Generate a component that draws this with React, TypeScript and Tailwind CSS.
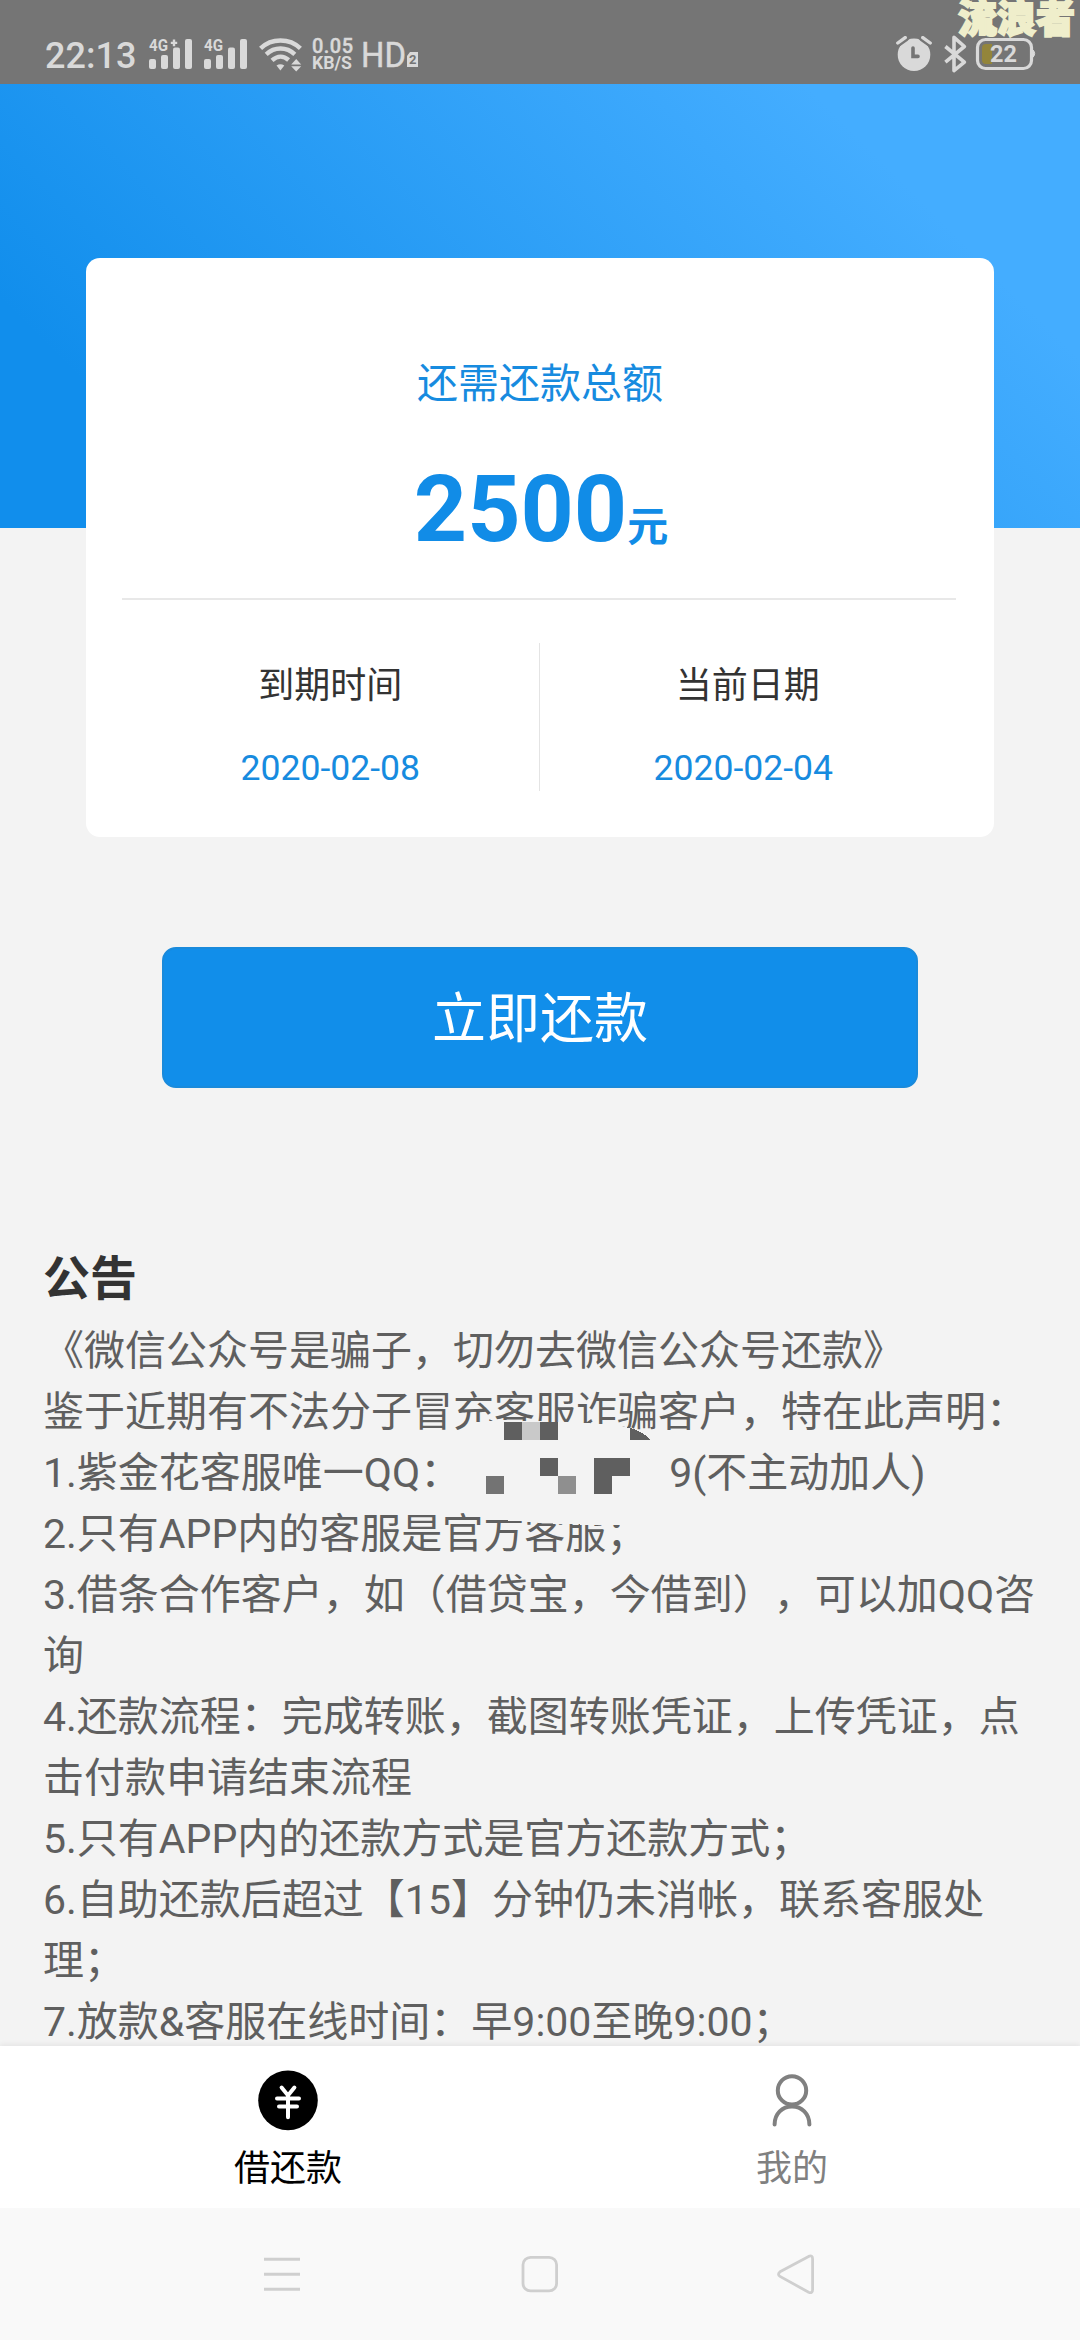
import React from "react";

const notices = [
  "《微信公众号是骗子，切勿去微信公众号还款》",
  "鉴于近期有不法分子冒充客服诈骗客户，特在此声明：",
  "1.紫金花客服唯一QQ：",
  "2.只有APP内的客服是官方客服；",
  "3.借条合作客户，如（借贷宝，今借到），可以加QQ咨询",
  "4.还款流程：完成转账，截图转账凭证，上传凭证，点击付款申请结束流程",
  "5.只有APP内的还款方式是官方还款方式；",
  "6.自助还款后超过【15】分钟仍未消帐，联系客服处理；",
  "7.放款&客服在线时间：早9:00至晚9:00；",
];

const dates = [
  { label: "到期时间", value: "2020-02-08" },
  { label: "当前日期", value: "2020-02-04" },
];

const Signal = ({ plus = false }: { plus?: boolean }) => (
  <svg width="44" height="36" viewBox="0 0 44 36" fill="#d9d9d9" className="overflow-visible">
    <text
      x="0"
      y="15"
      fontSize="16"
      fontWeight="700"
      textLength="19"
      lengthAdjust="spacingAndGlyphs"
    >
      4G
    </text>
    {plus && <path d="M25 3.6v6.6M21.8 6.9h6.4" stroke="#d9d9d9" strokeWidth="2.4" />}
    <rect x="0" y="23" width="7" height="10" rx="2" />
    <rect x="12" y="19" width="7" height="14" rx="2" />
    <rect x="24" y="11.5" width="7" height="21.5" rx="2" />
    <rect x="36" y="3" width="7" height="30" rx="2" />
  </svg>
);

const Wifi = () => (
  <svg width="44" height="36" viewBox="0 0 44 36" fill="none" stroke="#d9d9d9" strokeWidth="4.4">
    <path d="M1.6 12.4C12.5 1.9 30.5 1.9 41.4 12.4" />
    <path d="M7.2 18.4C15.5 10.6 27.5 10.6 35.8 18.4" />
    <path d="M13 24.4C18.5 19.4 24.5 19.4 29.6 24" />
    <path d="M17.5 29.6Q21.3 27 25.3 29.6L21.4 34.4Z" fill="#d9d9d9" stroke="none" />
    <path d="M37.2 23l5 5.6h-10zM37.2 35.4l5-5.2h-10z" fill="#d9d9d9" stroke="none" />
  </svg>
);

const StatusBar = () => (
  <div className="relative flex h-[84px] shrink-0 items-start justify-between bg-[#757575] pt-9 pr-[43px] pl-[45px] text-[#d9d9d9]">
    <div className="flex">
      <span className="w-[104px] text-[36px] leading-[40px] font-medium">22:13</span>
      <div className="flex w-[110px] gap-[11px]">
        <Signal plus />
        <Signal />
      </div>
      <Wifi />
      <svg width="44" height="36" viewBox="0 0 44 36" fill="#d9d9d9" className="ml-[9px] overflow-visible">
        <text x="0" y="17" fontSize="20" fontWeight="500" textLength="41" stroke="#d9d9d9" strokeWidth="0.4">
          0.05
        </text>
        <text x="0" y="33" fontSize="18" fontWeight="700" textLength="40" lengthAdjust="spacingAndGlyphs">
          KB/S
        </text>
      </svg>
      <svg width="60" height="36" viewBox="0 0 60 36" fill="#d9d9d9" className="ml-[5px] overflow-visible">
        <text
          x="0"
          y="31"
          fontSize="35"
          textLength="45"
          lengthAdjust="spacingAndGlyphs"
          stroke="#d9d9d9"
          strokeWidth="0.5"
        >
          HD
        </text>
        <path d="M49 16h8v15H46V20z" />
        <text x="48" y="28.4" fontSize="13" fontWeight="700" fill="#757575">
          2
        </text>
      </svg>
    </div>
    <div className="flex">
      <svg width="38" height="38" viewBox="0 0 38 38" fill="none" strokeLinecap="round">
        <circle cx="19" cy="18.8" r="16.3" fill="#d9d9d9" />
        <path d="M2.6 7L10.4 1.4M35.4 7L27.6 1.4" stroke="#757575" strokeWidth="8" />
        <path d="M2.8 7L10.2 1.6M35.2 7L27.8 1.6" stroke="#d9d9d9" strokeWidth="3.4" />
        <path d="M18 12v8.4h5" stroke="#757575" strokeWidth="3.6" />
      </svg>
      <svg width="30" height="38" viewBox="0 0 30 38" fill="none" className="ml-[9px] overflow-visible">
        <path
          d="M3.4 10.5L22.4 26.2L12 34.6V1.4L22.4 10.5L3.4 26.2"
          stroke="#d9d9d9"
          strokeWidth="3.6"
          strokeLinejoin="round"
        />
      </svg>
      <svg width="62" height="38" viewBox="0 0 62 38" fill="none" className="ml-[3px]">
        <rect x="2.5" y="3.5" width="54" height="29" rx="8" stroke="#d9d9d9" strokeWidth="3.2" />
        <path d="M58 14q3.4 3.6 0 7.2z" fill="#d9d9d9" stroke="#d9d9d9" />
        <path d="M17 8h-6q-4 0-4 4v12q0 4 4 4h6z" fill="#93853b" />
        <text x="15" y="26" fontSize="23.5" fontWeight="700" fill="#d9d9d9">
          22
        </text>
      </svg>
    </div>
    <span className="absolute top-0 right-[5px] text-[39px] leading-[38px] font-black text-[#efeecb] [-webkit-text-stroke:2px_#efeecb]">
      流浪者
    </span>
  </div>
);

// Pixelated patch that hides the QQ number, it also eats into the lines around it
const Mosaic = () => (
  <svg
    className="absolute top-[182px] left-[427px]"
    width="200"
    height="120"
    viewBox="470 1414 200 120"
    shapeRendering="crispEdges"
  >
    <path
      d="M476 1422L504 1420L558 1422L600 1424L618 1426L630 1428L660 1441V1500L640 1526L600 1525L560 1524L530 1522L486 1519L470 1500V1440Z"
      fill="#f3f3f3"
    />
    <path d="M504 1422h18v18h-18zM540 1422h18v18h-18zM540 1458h18v18h-18zM594 1458h36v18h-18v18h-18z" fill="#5f5f5f" />
    <path d="M522 1422h18v18h-18z" fill="#c9c9c9" />
    <path d="M486 1476h18v18h-18z" fill="#737373" />
    <path d="M558 1476h18v18h-18z" fill="#8f8f8f" />
    <path d="M630 1428q12 3 21 12h-21z" fill="#5f5f5f" />
  </svg>
);

const LoanCard = () => (
  <div className="mx-[86px] -mt-[270px] flex h-[579px] flex-col rounded-[14px] bg-white">
    <div className="mt-[96px] text-center text-[41px] leading-[60px] text-[#178bdf]">
      还需还款总额
    </div>
    <div className="mt-[41px] flex h-[110px] items-baseline justify-center pl-[2px] font-bold text-[#118ce7]">
      <span className="text-[93px] leading-[110px]">2500</span>
      <span className="text-[41px]">元</span>
    </div>
    <div className="mt-[33px] mr-[38px] ml-[36px] h-[2px] bg-[#e8e8e8]" />
    <div className="mt-[43px] mr-[38px] ml-[36px] flex h-[148px]">
      {dates.map((item, index) => (
        <div
          key={item.label}
          className={
            index === 0
              ? "flex flex-1 flex-col items-center border-r border-[#e4e4e4]"
              : "flex flex-1 flex-col items-center"
          }
        >
          <span className="mt-[17px] text-[36px] leading-[52px] text-[#333]">{item.label}</span>
          <span
            className={
              index === 0
                ? "mt-[30px] text-[35.6px] leading-[52px] text-[#178bdf]"
                : "mt-[30px] pr-[9px] text-[35.6px] leading-[52px] text-[#178bdf]"
            }
          >
            {item.value}
          </span>
        </div>
      ))}
    </div>
  </div>
);

const Notice = () => (
  <div className="relative mx-[43px] mt-[144px]">
    <h2 className="h-[89px] text-[47px] leading-[94px] font-bold text-[#333]">公告</h2>
    <div className="text-[41px] leading-[61px] text-[#5f5f5f]">
      {notices.map((line, index) => (
        <p key={index}>
          {line}
          {index === 2 && <span className="ml-[208px]">9(不主动加人)</span>}
        </p>
      ))}
    </div>
    <Mosaic />
  </div>
);

const TabBar = () => (
  <div className="flex h-[162px] shrink-0 bg-white px-[36px] pt-[24px] shadow-[0_-2px_5px_rgba(0,0,0,0.06)]">
    <div className="flex flex-1 flex-col items-center">
      <svg width="60" height="61" viewBox="0 0 60 61" fill="none">
        <circle cx="30" cy="30.4" r="29.8" fill="#000" />
        <path
          d="M23.6 17.5L30 25.4L36.4 17.5M19 28.4h22M21 36.4h18M30 25.4v21.8"
          stroke="#fff"
          strokeWidth="4"
          strokeLinecap="round"
        />
      </svg>
      <span className="mt-[11px] text-[36px] leading-[54px] text-black">借还款</span>
    </div>
    <div className="flex flex-1 flex-col items-center">
      <svg width="60" height="61" viewBox="0 0 60 61" fill="none" stroke="#808080" strokeWidth="4" strokeLinecap="round">
        <circle cx="30" cy="20.4" r="14.2" />
        <path d="M12.6 54.4C12.6 43.5 20.4 36.4 30 36.4S47.4 43.5 47.4 54.4" />
      </svg>
      <span className="mt-[11px] text-[36px] leading-[54px] text-[#808080]">我的</span>
    </div>
  </div>
);

const SystemBar = () => (
  <div className="flex h-[132px] shrink-0 items-center justify-between bg-[#f9f9f9] pr-[264px] pl-[262px]">
    <svg width="40" height="44" viewBox="0 0 40 44" fill="none" stroke="#cfcfcf" strokeWidth="3">
      <path d="M2 7.3h36M2 22.3h36M2 37.3h36" />
    </svg>
    <svg width="40" height="44" viewBox="0 0 40 44" fill="none" stroke="#cfcfcf" strokeWidth="2.8">
      <rect x="4" y="5.3" width="33.6" height="33.6" rx="7.5" />
    </svg>
    <svg width="40" height="44" viewBox="0 0 40 44" fill="none" stroke="#cfcfcf" strokeWidth="2.8">
      <path d="M4 19.8L32.6 4.4Q36.6 2.6 36.6 7V37.6Q36.6 42 32.6 40.2L4 24.4Q1 22.2 4 19.8Z" />
    </svg>
  </div>
);

const App = () => {
  return (
    <div className="flex h-[2340px] w-[1080px] flex-col overflow-hidden bg-[#f3f3f3] font-[Roboto,'Noto_Sans_CJK_SC',sans-serif] [text-spacing-trim:space-all]">
      <StatusBar />
      <div className="h-[1962px] overflow-hidden">
        <div className="h-[444px] bg-[linear-gradient(45deg,#118eec_15%,#44adff_82%)]" />
        <LoanCard />
        <button className="mx-auto mt-[110px] flex h-[141px] w-[756px] items-center justify-center rounded-[14px] border-2 border-[#1a8adb] bg-[#118eea] pt-[4px] text-[54px] text-white">
          立即还款
        </button>
        <Notice />
      </div>
      <TabBar />
      <SystemBar />
    </div>
  );
};

export default App;
